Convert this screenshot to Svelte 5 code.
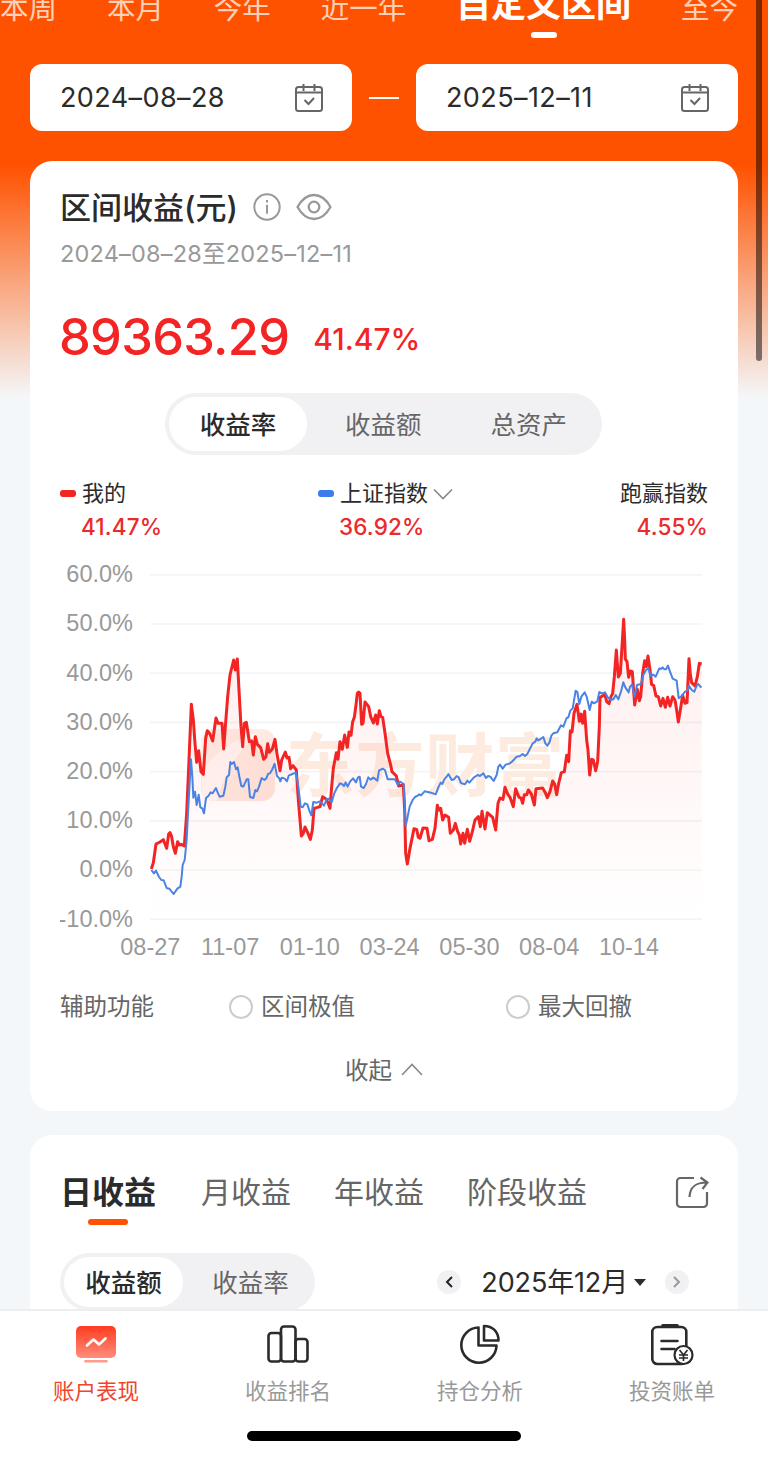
<script lang="ts">
  type Point = [number, number];

  const ranges = ['本周', '本月', '今年', '近一年', '自定义区间', '至今'];
  const activeRange = '自定义区间';
  const dates = ['2024–08–28', '2025–12–11'];
  const metrics = ['收益率', '收益额', '总资产'];
  const periods = ['日收益', '月收益', '年收益', '阶段收益'];
  const navItems = ['账户表现', '收益排名', '持仓分析', '投资账单'];

  let metric = $state('收益率');
  let period = $state('日收益');
  let dayMetric = $state('收益额');
  let nav = $state('账户表现');

  // chart units: three per css pixel, 10% is 147.6 units high
  const yTicks = [60, 50, 40, 30, 20, 10, 0, -10];
  const xTicks = ['08-27', '11-07', '01-10', '03-24', '05-30', '08-04', '10-14'];
  const yPos = (v: number) => 930 - v * 14.76;

  const mine: Point[] = [
    [274,927],[280,908],[288,852],[300,846],[310,839],[320,865],[326,822],[330,818],[335,830],[340,860],
    [346,880],[353,845],[358,855],[364,853],[373,858],[380,760],[387,600],[394,433],[400,480],[405,550],
    [410,607],[416,572],[423,635],[430,643],[437,535],[442,512],[450,522],[458,543],[468,474],[474,490],
    [486,490],[491,567],[496,500],[503,410],[510,345],[521,300],[526,330],[532,297],[537,390],[543,500],
    [548,560],[553,490],[559,487],[568,545],[575,543],[580,585],[586,530],[592,553],[602,563],[611,598],
    [618,590],[623,551],[628,577],[637,567],[645,538],[651,582],[660,632],[665,600],[676,576],[681,594],
    [687,592],[692,626],[699,617],[709,630],[715,720],[724,828],[730,820],[735,801],[743,818],[751,838],
    [757,810],[762,745],[780,740],[788,710],[797,716],[803,726],[810,745],[815,680],[820,625],[829,578],
    [834,598],[840,545],[847,568],[854,525],[862,562],[867,516],[873,526],[878,485],[883,472],[888,435],
    [892,400],[896,396],[900,400],[905,493],[909,490],[915,426],[926,440],[932,470],[940,489],[947,465],
    [952,492],[958,452],[963,470],[968,472],[975,520],[983,580],[992,615],[996,635],[1009,648],[1016,678],
    [1030,675],[1034,750],[1037,880],[1042,912],[1050,865],[1062,806],[1070,808],[1075,832],[1080,835],[1089,804],
    [1101,805],[1107,842],[1117,838],[1125,805],[1132,736],[1137,750],[1142,745],[1148,780],[1155,765],[1166,772],
    [1171,820],[1180,810],[1186,790],[1193,815],[1198,825],[1202,852],[1209,820],[1214,850],[1222,808],[1229,844],
    [1237,815],[1245,780],[1255,770],[1261,800],[1266,754],[1275,807],[1282,758],[1298,772],[1307,810],[1314,730],
    [1320,714],[1329,718],[1335,682],[1343,702],[1350,712],[1360,740],[1367,686],[1377,712],[1383,714],[1388,730],
    [1393,704],[1400,704],[1405,690],[1414,702],[1423,735],[1428,686],[1448,684],[1456,698],[1462,713],[1470,695],
    [1478,663],[1484,672],[1490,704],[1496,670],[1504,638],[1513,635],[1520,586],[1526,605],[1531,513],[1536,516],
    [1542,460],[1551,433],[1558,484],[1563,462],[1568,490],[1574,454],[1580,540],[1584,570],[1589,645],[1595,598],
    [1600,600],[1607,632],[1613,605],[1618,500],[1620,412],[1635,404],[1640,425],[1647,431],[1653,410],[1658,400],
    [1663,350],[1669,270],[1675,351],[1681,340],[1686,260],[1691,178],[1694,240],[1696,297],[1701,305],[1706,352],
    [1711,333],[1717,335],[1720,380],[1724,435],[1732,388],[1738,422],[1742,410],[1748,340],[1754,302],[1759,320],
    [1764,288],[1770,330],[1775,374],[1781,376],[1788,408],[1795,410],[1802,438],[1809,415],[1816,442],[1823,412],
    [1830,438],[1838,410],[1845,420],[1850,450],[1855,486],[1861,450],[1868,406],[1875,430],[1881,428],[1887,296],
    [1891,342],[1895,368],[1905,378],[1912,350],[1918,310],[1925,312],
  ];

  const index: Point[] = [
    [274,930],[282,940],[288,932],[297,951],[304,960],[311,961],[320,984],[328,986],[336,996],[341,1002],
    [352,986],[361,980],[365,950],[368,915],[374,900],[380,840],[384,760],[389,670],[393,598],[397,650],
    [400,713],[405,695],[410,735],[416,704],[421,742],[427,745],[432,760],[438,714],[445,708],[452,697],
    [458,700],[468,684],[474,700],[479,710],[490,707],[496,680],[500,652],[507,645],[511,606],[515,612],
    [522,606],[528,628],[533,622],[539,655],[544,678],[550,680],[560,658],[565,658],[570,711],[580,714],
    [586,690],[591,694],[597,680],[605,654],[613,660],[619,655],[624,642],[630,640],[636,630],[644,611],
    [651,648],[658,655],[661,664],[665,653],[674,656],[681,664],[686,647],[697,642],[708,638],[715,680],
    [722,740],[728,742],[735,730],[742,733],[748,752],[754,766],[760,726],[770,728],[780,724],[792,737],
    [800,718],[807,716],[815,727],[823,700],[830,685],[840,670],[846,672],[852,678],[857,667],[863,680],
    [870,665],[879,655],[888,667],[894,652],[899,650],[903,680],[911,684],[918,672],[925,652],[932,659],
    [940,653],[952,662],[957,632],[968,626],[975,630],[983,658],[1005,658],[1013,674],[1020,665],[1031,672],
    [1037,797],[1042,775],[1049,740],[1058,720],[1065,711],[1073,707],[1078,703],[1083,706],[1094,694],[1113,698],
    [1127,703],[1136,680],[1142,668],[1147,672],[1153,658],[1160,650],[1165,642],[1175,660],[1182,658],[1190,648],
    [1196,652],[1203,669],[1215,673],[1222,662],[1228,668],[1242,652],[1253,645],[1260,648],[1270,640],[1278,654],
    [1284,648],[1291,650],[1301,663],[1310,645],[1315,620],[1320,614],[1328,626],[1337,614],[1350,610],[1358,603],
    [1370,590],[1380,588],[1388,582],[1395,588],[1402,582],[1418,550],[1426,545],[1430,535],[1434,541],[1442,537],
    [1450,531],[1456,550],[1462,557],[1468,548],[1474,527],[1480,520],[1492,517],[1503,496],[1510,500],[1520,474],
    [1525,472],[1531,452],[1538,445],[1547,392],[1552,396],[1558,432],[1564,410],[1574,397],[1580,410],[1589,450],
    [1595,425],[1602,430],[1612,424],[1618,396],[1626,400],[1635,397],[1643,412],[1653,420],[1661,417],[1667,405],
    [1675,418],[1683,395],[1690,367],[1696,382],[1706,397],[1710,380],[1716,374],[1724,410],[1731,375],[1743,372],
    [1750,345],[1758,330],[1765,325],[1772,348],[1780,344],[1787,350],[1798,325],[1803,327],[1808,322],[1813,328],
    [1818,328],[1824,317],[1830,335],[1838,356],[1850,362],[1856,415],[1865,408],[1875,395],[1882,392],[1887,377],
    [1895,390],[1903,395],[1910,377],[1915,372],[1921,380],[1925,381],
  ];

  const toPath = (points: Point[]) => 'M' + points.map((p) => p.join(' ')).join('L');
</script>

<div class="screen">
  <main>
    <nav class="ranges">
      {#each ranges as range (range)}
        <span class="range" class:active={range === activeRange}>{range}</span>
      {/each}
    </nav>

    <div class="dates">
      {#each dates as date, i (date)}
        {#if i > 0}<i class="dash"></i>{/if}
        <div class="date">
          <span>{date}</span>
          <svg width="30" height="30" viewBox="0 0 30 30" fill="none" stroke="#666" stroke-width="2">
            <rect x="2" y="4" width="26" height="24" rx="2.5" />
            <path d="M2 9.500H28M9.500 1v7M20.500 1v7M10.500 17l4 4 5.500-6" />
          </svg>
        </div>
      {/each}
    </div>

    <section class="card summary">
      <div class="title">
        <h1>区间收益(元)</h1>
        <svg width="28" height="28" viewBox="0 0 28 28" fill="none" stroke="#999" stroke-width="2">
          <circle cx="14" cy="14" r="12.700" />
          <path d="M14 11.800v9M14 7v2.400" />
        </svg>
        <svg class="eye" width="36" height="28" viewBox="0 0 36 28" fill="none" stroke="#999" stroke-width="2.300">
          <path d="M1.500 14C6 6 12 2 18 2s12 4 16.500 12C30 22 24 26 18 26S6 22 1.500 14Z" stroke-linejoin="round" />
          <circle cx="18" cy="14" r="5.300" />
        </svg>
      </div>
      <p class="period">2024–08–28至2025–12–11</p>
      <div class="total">
        <strong>89363.29</strong>
        <span>41.47%</span>
      </div>

      <div class="segmented large">
        {#each metrics as item (item)}
          <button class:on={metric === item} onclick={() => (metric = item)}>{item}</button>
        {/each}
      </div>

      <div class="legend">
        <div class="entry">
          <span class="name"><i class="mark red"></i>我的</span>
          <span class="value">41.47%</span>
        </div>
        <div class="entry second">
          <span class="name">
            <i class="mark blue"></i>上证指数
            <svg width="20" height="12" viewBox="0 0 20 12" fill="none" stroke="#888" stroke-width="1.600">
              <path d="M1 1.500l9 9 9-9" />
            </svg>
          </span>
          <span class="value">36.92%</span>
        </div>
        <div class="entry right">
          <span class="name">跑赢指数</span>
          <span class="value">4.55%</span>
        </div>
      </div>

      <svg class="chart" viewBox="0 0 1944 1230">
        <defs>
          <linearGradient id="area" gradientUnits="userSpaceOnUse" x1="0" y1="178" x2="0" y2="1078">
            <stop offset="0" stop-color="#f22" stop-opacity="0.080" />
            <stop offset="1" stop-color="#f22" stop-opacity="0" />
          </linearGradient>
          <linearGradient id="logo" x1="0" y1="0" x2="1" y2="1">
            <stop offset="0" stop-color="#fff0e8" />
            <stop offset="1" stop-color="#fde3da" />
          </linearGradient>
        </defs>
        {#each yTicks as tick (tick)}
          <path class="grid" d="M270 {yPos(tick)}H1926" />
          <text class="tick" x="219" y={yPos(tick) + 22} text-anchor="end">{tick.toFixed(1)}%</text>
        {/each}
        {#each xTicks as tick, i (tick)}
          <text class="tick" x={271 + i * 239.300} y="1184" text-anchor="middle">{tick}</text>
        {/each}
        <g class="watermark">
          <rect x="423" y="507" width="222" height="216" rx="38" fill="url(#logo)" />
          <path d="M427 625C490 560 540 530 590 520C540 575 500 620 470 722C445 722 425 715 425 690Z" fill="#fff6f2" />
          <text x="677" y="692" textLength="835">东方财富</text>
        </g>
        <path d="{toPath(mine)}V1078H274Z" fill="url(#area)" />
        <path class="line mine" d={toPath(mine)} />
        <path class="line index" d={toPath(index)} />
      </svg>

      <div class="options">
        <span class="caption">辅助功能</span>
        <span class="option first"><i></i>区间极值</span>
        <span class="option"><i></i>最大回撤</span>
      </div>
      <div class="collapse">
        收起
        <svg width="22" height="13" viewBox="0 0 22 13" fill="none" stroke="#888" stroke-width="1.600">
          <path d="M1 12L11 1.500 21 12" />
        </svg>
      </div>
    </section>

    <section class="card detail">
      <div class="periods">
        {#each periods as item (item)}
          <button class:active={period === item} onclick={() => (period = item)}>{item}</button>
        {/each}
        <svg class="share" width="34" height="34" viewBox="0 0 34 34" fill="none" stroke="#666" stroke-width="2.200">
          <path d="M19 3H5.500a3.500 3.500 0 0 0-3.500 3.500v22a3.500 3.500 0 0 0 3.500 3.500h23a3.500 3.500 0 0 0 3.500-3.500V17" />
          <path d="M14.500 22C15 12 20 7.500 32 7.500M25.500 2.500l7 5-5 6.500" />
        </svg>
      </div>
      <div class="filters">
        <div class="segmented">
          {#each ['收益额', '收益率'] as item (item)}
            <button class:on={dayMetric === item} onclick={() => (dayMetric = item)}>{item}</button>
          {/each}
        </div>
        <div class="month">
          <span class="arrow">
            <svg width="8" height="12" viewBox="0 0 8 12" fill="none" stroke="#222" stroke-width="2"><path d="M7 1L2 6l5 5" /></svg>
          </span>
          <span class="current">2025年12月</span>
          <i class="caret"></i>
          <span class="arrow">
            <svg width="8" height="12" viewBox="0 0 8 12" fill="none" stroke="#999" stroke-width="2"><path d="M1 1l5 5-5 5" /></svg>
          </span>
        </div>
      </div>
    </section>
  </main>

  <footer>
    <div class="tabbar">
      {#each navItems as item, i (item)}
        <button class:active={nav === item} onclick={() => (nav = item)}>
          <svg width="44" height="44" viewBox="0 0 44 44" fill="none" stroke="#2b2b2b" stroke-width="2.600">
            {#if i === 0}
              <defs>
                <linearGradient id="tab" x1="0" y1="0" x2="0" y2="1">
                  <stop offset="0" stop-color="#ff3c1e" />
                  <stop offset="1" stop-color="#ff8d7c" />
                </linearGradient>
              </defs>
              <rect x="2" y="3" width="40" height="32" rx="5" fill="url(#tab)" stroke="none" />
              <path d="M13 22.500l6.500-6 5.500 5 6.500-6" stroke="#fff" stroke-linecap="round" stroke-linejoin="round" />
              <path d="M11.500 38.300h21" stroke="#ff9b8c" stroke-linecap="round" />
            {:else if i === 1}
              <rect x="2.500" y="10" width="12.500" height="28.500" rx="3" />
              <rect x="15" y="3.500" width="14.500" height="35" rx="3" />
              <rect x="29.500" y="16" width="12" height="22.500" rx="3" />
            {:else if i === 2}
              <path d="M20.500 4.500A17.600 17.600 0 1 0 38.500 22.500H20.500Z" stroke-linejoin="round" />
              <path d="M26 3v14.500h14.500C40.500 8.500 34.500 3 26 3Z" stroke-linejoin="round" />
            {:else}
              <rect x="2.300" y="4" width="34" height="37" rx="5" />
              <path d="M13 3h14" stroke-width="4" stroke-linecap="round" />
              <path d="M11.500 18h16M11.500 26h13" stroke-linecap="round" />
              <circle cx="33.500" cy="32" r="9" fill="#fff" stroke-width="2.200" />
              <path d="M29.500 27l4 5 4-5M33.500 32v6M29 32h9M29 35h9" stroke-width="1.700" />
            {/if}
          </svg>
          <span>{item}</span>
        </button>
      {/each}
    </div>
    <i class="home"></i>
  </footer>
  <i class="scrollbar"></i>
</div>

<style>
  :global(body) {
    margin: 0;
  }
  .screen {
    position: relative;
    width: 768px;
    height: 1458px;
    overflow: hidden;
    display: flex;
    flex-direction: column;
    background: #f4f7f9;
    color: #2b2b2b;
    font-family: Inter, 'Noto Sans CJK SC', sans-serif;
  }
  main {
    height: 1309px;
    overflow: hidden;
    background: linear-gradient(#ff5200 0, #ff5200 165px, #f4f7f9 398px);
  }
  button {
    padding: 0;
    border: 0;
    background: none;
    color: inherit;
    font: inherit;
  }
  h1,
  p {
    margin: 0;
  }

  .ranges {
    display: flex;
    justify-content: space-between;
    align-items: center;
    width: 738px;
    height: 58px;
    margin-top: -23px;
    padding-bottom: 29px;
  }
  .range {
    position: relative;
    color: #ffd0b8;
    font-size: 28.500px;
    white-space: nowrap;
  }
  .range.active {
    margin-top: -10px;
    color: #fff;
    font-size: 35px;
    font-weight: 700;
  }
  .range.active::after {
    content: '';
    position: absolute;
    left: 50%;
    bottom: -11px;
    width: 26px;
    height: 6px;
    margin-left: -13px;
    border-radius: 3px;
    background: #fff;
  }

  .dates {
    display: flex;
    align-items: center;
    justify-content: space-between;
    padding: 0 30px;
  }
  .date {
    display: flex;
    align-items: center;
    justify-content: space-between;
    box-sizing: border-box;
    width: 322px;
    height: 67px;
    padding: 0 28px 0 30px;
    border-radius: 12px;
    background: #fff;
    font-size: 27px;
    letter-spacing: 0.400px;
  }
  .dash {
    width: 30px;
    height: 2px;
    background: #fff;
  }

  .card {
    margin: 0 30px;
    padding: 0 30px;
    border-radius: 22px;
    background: #fff;
  }
  .summary {
    margin-top: 30px;
    padding-top: 24px;
    padding-bottom: 15px;
  }
  .title {
    display: flex;
    align-items: center;
    height: 44px;
  }
  .title h1 {
    margin-right: 15px;
    padding-bottom: 4px;
    font-size: 31px;
    font-weight: 500;
  }
  .eye {
    margin-left: 15px;
  }
  .period {
    height: 50px;
    color: #999;
    font-size: 23.500px;
    letter-spacing: 0.200px;
    line-height: 50px;
  }
  .total {
    display: flex;
    align-items: baseline;
    box-sizing: border-box;
    height: 114px;
    padding-top: 27px;
    color: #f22424;
  }
  .total strong {
    margin-left: -1px;
    margin-right: 24px;
    font-size: 50.500px;
    font-weight: 450;
    letter-spacing: -0.700px;
  }
  .total span {
    position: relative;
    top: -5px;
    font-size: 30px;
    font-weight: 450;
  }

  .segmented {
    display: flex;
    box-sizing: border-box;
    width: 255px;
    height: 58px;
    padding: 4px;
    border-radius: 31px;
    background: #f1f1f4;
    color: #666;
    font-size: 25.500px;
  }
  .segmented button {
    flex: 1;
    padding: 0 0 4px 7px;
    border-radius: 28px;
  }
  .segmented .on {
    flex: none;
    width: 119px;
    padding-left: 0;
    background: #fff;
    color: #2b2b2b;
    font-weight: 500;
  }
  .segmented.large {
    width: 437px;
    height: 62px;
    margin-left: 105px;
  }
  .segmented.large .on {
    width: 138px;
  }

  .legend {
    display: flex;
    height: 66px;
    margin-top: 22px;
    line-height: 33px;
  }
  .entry {
    display: flex;
    flex-direction: column;
    width: 258px;
    font-size: 22px;
    font-weight: 500;
  }
  .entry.right {
    width: auto;
    margin-left: auto;
    align-items: flex-end;
  }
  .name {
    display: flex;
    align-items: center;
    height: 33px;
    font-weight: 400;
  }
  .name svg {
    margin-left: 5px;
  }
  .mark {
    width: 16px;
    height: 7px;
    margin-right: 6px;
    border-radius: 3px;
  }
  .mark.red {
    background: #f22424;
  }
  .mark.blue {
    background: #3b7ded;
  }
  .value {
    padding-left: 21px;
    color: #e92b2b;
    font-size: 22.500px;
    font-weight: 450;
    letter-spacing: 0.150px;
    line-height: 33px;
  }

  .chart {
    display: block;
    width: 648px;
    height: 410px;
    margin-top: 17px;
  }
  .grid {
    stroke: #f3f4f6;
    stroke-width: 5;
  }
  .tick {
    fill: #999;
    font-family: 'Liberation Sans', Arial, sans-serif;
    font-size: 70.500px;
  }
  .watermark text {
    fill: #fdebe0;
    font-size: 208px;
    font-weight: 700;
  }
  .line {
    fill: none;
    stroke-linejoin: round;
  }
  .line.mine {
    stroke: #f22424;
    stroke-width: 9;
  }
  .line.index {
    stroke: #4a83e4;
    stroke-width: 6;
  }

  .options {
    display: flex;
    align-items: center;
    height: 74px;
    color: #666;
    font-size: 23.500px;
    line-height: 36px;
  }
  .caption {
    width: 169px;
  }
  .option {
    display: flex;
    align-items: center;
  }
  .option.first {
    width: 277px;
  }
  .option i {
    box-sizing: border-box;
    width: 24px;
    height: 24px;
    margin-right: 8px;
    border: 2px solid #ccc;
    border-radius: 50%;
  }
  .collapse {
    display: flex;
    align-items: center;
    justify-content: center;
    gap: 9px;
    height: 50px;
    padding-bottom: 2px;
    color: #666;
    font-size: 23.500px;
  }

  .detail {
    height: 200px;
    margin-top: 24px;
  }
  .periods {
    display: flex;
    align-items: center;
    gap: 43px;
    height: 114px;
    margin-bottom: 4px;
    color: #666;
    font-size: 30px;
  }
  .periods button {
    position: relative;
    padding: 0 0 4px;
  }
  .periods .active {
    padding-right: 2px;
    color: #2b2b2b;
    font-size: 32px;
    font-weight: 700;
  }
  .periods .active::after {
    content: '';
    position: absolute;
    left: 48px;
    bottom: -8px;
    width: 40px;
    height: 6px;
    margin-left: -20px;
    border-radius: 3px;
    background: #ff5200;
  }
  .share {
    margin-right: -1px;
    margin-left: auto;
  }
  .filters {
    display: flex;
    align-items: center;
    justify-content: space-between;
  }
  .month {
    display: flex;
    align-items: center;
    margin-right: 19px;
    font-size: 27px;
  }
  .arrow {
    display: flex;
    align-items: center;
    justify-content: center;
    width: 24px;
    height: 24px;
    border-radius: 50%;
    background: #f1f1f4;
  }
  .current {
    margin: 0 6px 0 20px;
    padding-bottom: 3px;
    letter-spacing: -0.150px;
  }
  .caret {
    margin-right: 19px;
    border: 6.500px solid transparent;
    border-top: 7px solid #2b2b2b;
    border-bottom: 0;
  }

  footer {
    display: flex;
    flex-direction: column;
    align-items: center;
    box-sizing: border-box;
    height: 149px;
    border-top: 2px solid #eee;
    background: #fff;
  }
  .tabbar {
    display: flex;
    width: 100%;
    height: 120px;
  }
  .tabbar button {
    display: flex;
    flex: 1;
    flex-direction: column;
    align-items: center;
    padding-top: 12px;
    color: #999;
    font-size: 21.500px;
  }
  .tabbar span {
    margin-top: 8px;
    line-height: 32px;
  }
  .tabbar .active {
    color: #f0442c;
  }
  .home {
    width: 274px;
    height: 10px;
    border-radius: 5px;
    background: #000;
  }
  .scrollbar {
    position: absolute;
    top: 0;
    left: 756px;
    width: 6px;
    height: 361px;
    border-radius: 0 0 3px 3px;
    background: rgba(0, 0, 0, 0.500);
  }
</style>
